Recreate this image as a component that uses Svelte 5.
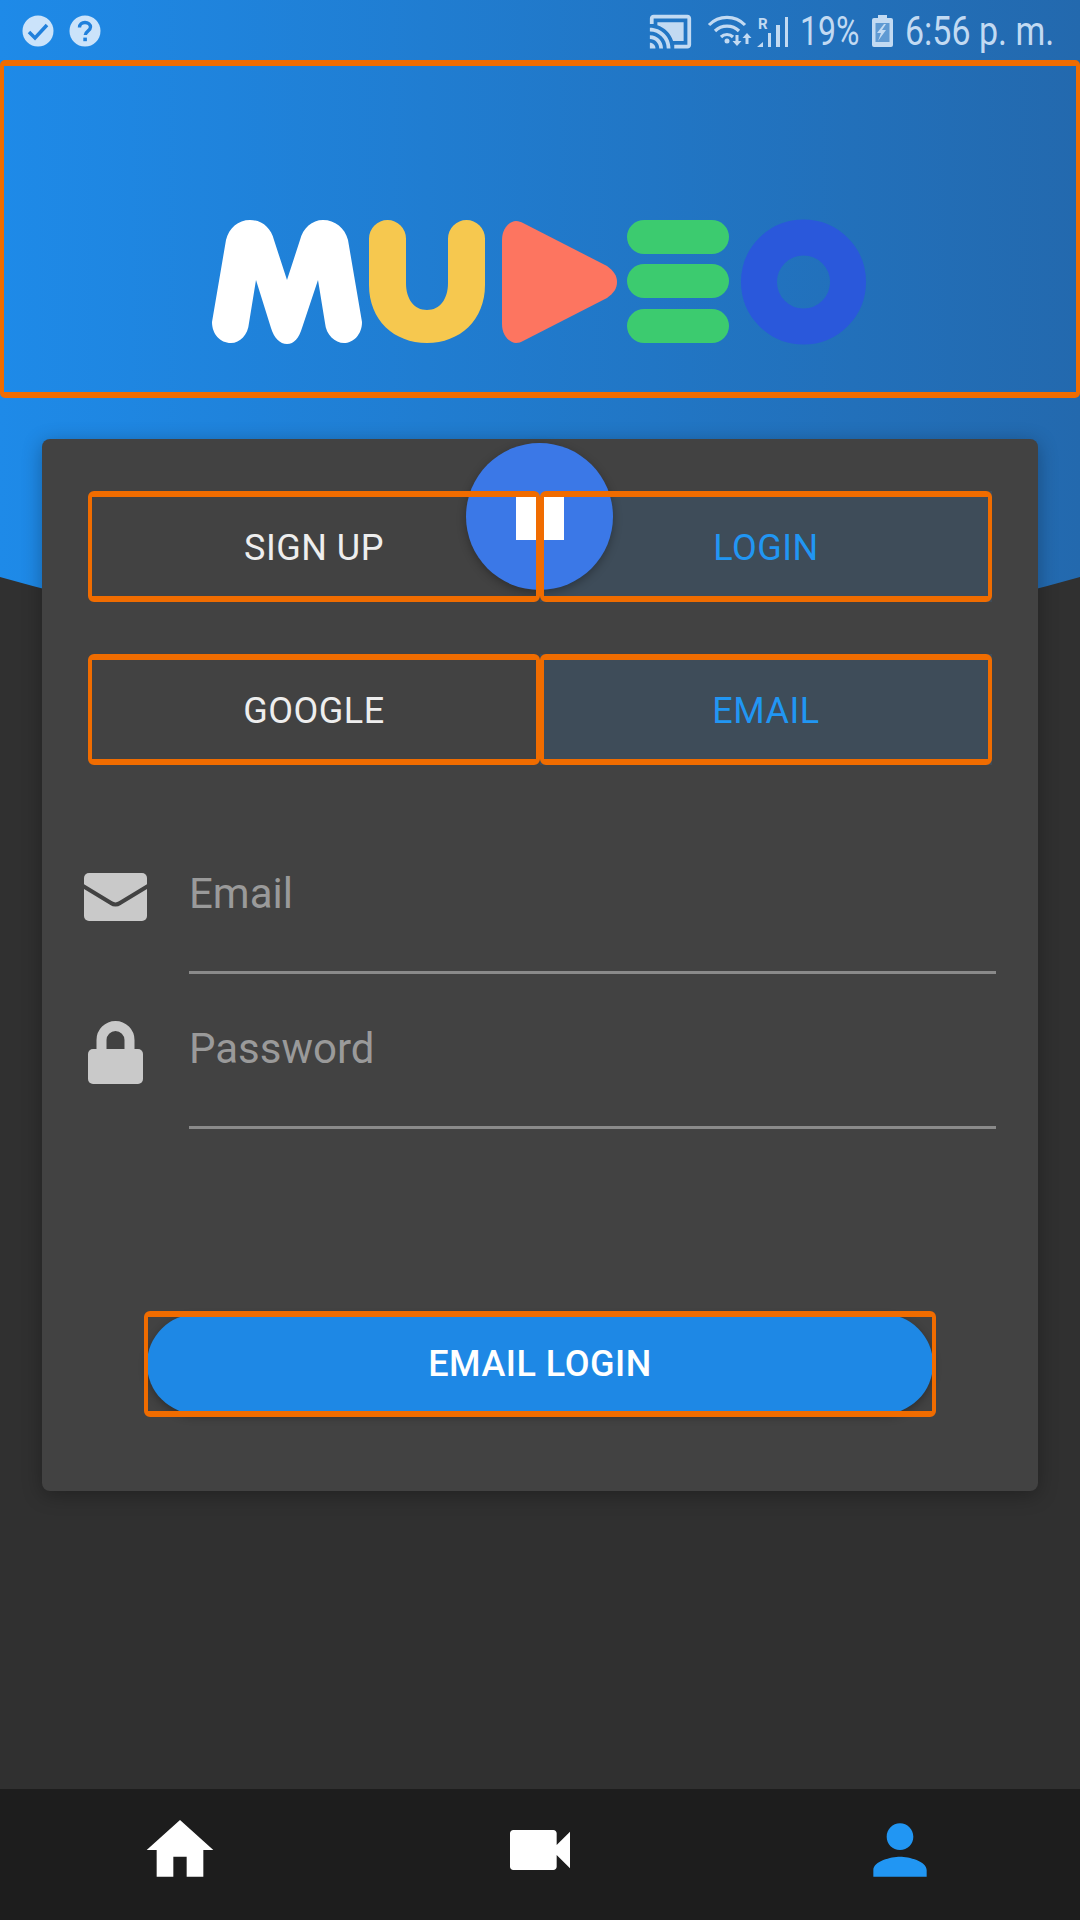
<script>
  const navItems = [
    { name: "home", active: false, d: "M10 20v-6h4v6h5v-8h3L12 3 2 12h3v8z" },
    { name: "video", active: false, d: "M17 10.5V7c0-.55-.45-1-1-1H4c-.55 0-1 .45-1 1v10c0 .55.45 1 1 1h12c.55 0 1-.45 1-1v-3.5l4 4v-11l-4 4z" },
    { name: "account", active: true, d: "M12 12c2.21 0 4-1.79 4-4s-1.79-4-4-4-4 1.79-4 4 1.79 4 4 4zm0 2c-2.67 0-8 1.34-8 4v2h16v-2c0-2.66-5.33-4-8-4z" }
  ];
</script>

<div class="page">
  <div class="backdrop"></div>

  <div class="status">
    <div class="status-left">
      <svg width="32" height="32" viewBox="0 0 32 32">
        <circle cx="16" cy="16" r="15.5" fill="#cbe3fa" />
        <path d="M7 17l6 6L25 10" fill="none" stroke="#2080dc" stroke-width="3.5" />
      </svg>
      <svg width="32" height="32" viewBox="0 0 32 32">
        <circle cx="16" cy="16" r="15.5" fill="#cbe3fa" />
        <path d="M10.5 12.5c0-3.2 2.4-5 5.5-5s5.5 1.8 5.5 4.6c0 4-5.2 4-5.2 8" fill="none" stroke="#2080dc" stroke-width="3.4" />
        <rect x="14.3" y="22.6" width="3.6" height="3.6" fill="#2080dc" />
      </svg>
    </div>
    <div class="status-right">
      <svg class="cast" width="45" height="45" viewBox="0 0 24 24">
        <path d="M1 18v3h3c0-1.66-1.34-3-3-3zm0-4v2c2.76 0 5 2.24 5 5h2c0-3.87-3.13-7-7-7zm18-7H5v1.63c3.96 1.28 7.09 4.41 8.37 8.37H19V7zM1 10v2c4.97 0 9 4.03 9 9h2c0-6.08-4.93-11-11-11zm20-7H3c-1.1 0-2 .9-2 2v3h2V5h18v14h-7v2h7c1.1 0 2-.9 2-2V5c0-1.1-.9-2-2-2z" />
      </svg>
      <div class="network">
        <svg width="85" height="40" viewBox="0 0 85 40">
          <g fill="none" stroke-width="3.2">
            <path d="M2 14a25 25 0 0 1 36 0" />
            <path d="M8 20a17 17 0 0 1 24 0" />
            <path d="M14 26a8.500 8.500 0 0 1 12 0" />
          </g>
          <circle cx="20" cy="30" r="2.500" />
          <path d="M28.500 24h3v6h3l-4.500 5-4.500-5h3zM40 22l4.500 5h-3v6h-3v-6h-3z" />
          <path d="M50 36l6-5v5zM61 22h3v14h-3zM69 14h4v22h-4zM78 6h3v30h-3z" />
        </svg>
        <span class="roaming">R</span>
      </div>
      <span class="percent"><span>19%</span></span>
      <svg class="battery" width="21" height="32" viewBox="0 0 21 32">
        <path d="M6 0h9v3h4q2 0 2 2v25q0 2-2 2H2q-2 0-2-2V5q0-2 2-2h4z" />
        <path class="battery-window" d="M3.500 8h14v19h-14z" />
        <path d="M12 9l-7 9h4l-3 8 8-11h-4l4-6z" />
      </svg>
      <span class="clock"><span>6:56 p. m.</span></span>
    </div>
  </div>

  <div class="logo-box">
    <svg width="656" height="126" viewBox="212 219 656 126">
      <path fill="#fff" d="M212 322L226 240C229 228 238 220 250 220C262 220 271 228 274 240L287 280L300 240C303 228 312 220 323 220C335 220 345 228 348 240L362 322C362 335 353 343 344 343C335 343 326 335 325 323L318 280L302 328C299 338 294 344 287 344C280 344 274 338 271 328L256 280L249 323C248 335 240 343 231 343C220 343 212 334 212 322Z" />
      <path fill="#f6c84f" d="M369 238.500a18.500 18.500 0 0 1 37 0V283C406 299 414 310 427 310C440 310 448 299 448 283V238.500a18.500 18.500 0 0 1 37 0V285C485 320 460 343 427 343C394 343 369 320 369 285Z" />
      <path fill="#fd7560" d="M502 240C502 228 510 221 516 221C519 221 521 222 523 223L607 266C614 271 617 276 617 282C617 288 614 293 607 298L523 341C521 342 519 343 516 343C510 343 502 336 502 324Z" />
      <rect x="627" y="220" width="102" height="34" rx="17" fill="#3ccb6f" />
      <rect x="627" y="264" width="102" height="34" rx="17" fill="#3ccb6f" />
      <rect x="627" y="309" width="102" height="34" rx="17" fill="#3ccb6f" />
      <circle cx="803.500" cy="282" r="44.500" fill="none" stroke="#2a58db" stroke-width="36" />
    </svg>
  </div>

  <div class="card">
    <div class="fab">
      <svg width="48" height="46" viewBox="0 0 48 46">
        <rect x="0" y="0" width="20" height="46" fill="#fff" />
        <rect x="28" y="0" width="20" height="46" fill="#fff" />
      </svg>
    </div>

    <div class="tabs">
      <div class="tab">SIGN UP</div>
      <div class="tab selected">LOGIN</div>
    </div>
    <div class="tabs">
      <div class="tab">GOOGLE</div>
      <div class="tab selected">EMAIL</div>
    </div>

    <div class="field">
      <div class="field-icon">
        <svg width="63" height="48" viewBox="0 0 63 48">
          <rect width="63" height="48" rx="5" fill="#c9c9c9" />
          <path d="M-1 13L27 30Q31.500 33 36 30L64 13" fill="none" stroke="#424242" stroke-width="4" />
        </svg>
      </div>
      <div class="field-line">Email</div>
    </div>
    <div class="field">
      <div class="field-icon lock">
        <svg width="55" height="63" viewBox="0 0 55 63">
          <path d="M13.500 30V19a14 14 0 0 1 28 0V30" fill="none" stroke="#c9c9c9" stroke-width="10" />
          <rect y="28" width="55" height="35" rx="5" fill="#c9c9c9" />
        </svg>
      </div>
      <div class="field-line">Password</div>
    </div>

    <div class="submit">EMAIL LOGIN</div>
  </div>

  <div class="nav">
    {#each navItems as item}
      <div class="nav-item" class:active={item.active}>
        <svg width="80" height="80" viewBox="0 0 24 24" aria-label={item.name}><path d={item.d} /></svg>
      </div>
    {/each}
  </div>
</div>

<style>
  :global(body) {
    margin: 0;
    background: #303030;
  }

  .page {
    position: relative;
    display: flex;
    flex-direction: column;
    width: 1080px;
    height: 1920px;
    overflow: hidden;
    background: #303030;
    font-family: Roboto, "Liberation Sans", sans-serif;
  }

  .backdrop {
    position: absolute;
    top: 0;
    left: 0;
    width: 1080px;
    height: 700px;
    background: linear-gradient(to right, #1e8ae8, #2369ae);
    clip-path: path("M0 0H1080V577Q540 730 0 577Z");
  }

  .status {
    position: relative;
    display: flex;
    justify-content: space-between;
    align-items: center;
    height: 60px;
    padding: 2px 20px 0 22px;
    box-sizing: border-box;
    color: #c2daf2;
  }

  .status-left {
    display: flex;
    gap: 15px;
  }

  .status-right {
    display: flex;
    align-items: center;
    font-size: 40px;
  }

  .status-right svg {
    display: block;
    fill: #c2daf2;
    stroke: #c2daf2;
    stroke-width: 0;
  }

  .status-right svg g {
    stroke-width: 3.2;
  }

  .status-right svg .battery-window {
    fill: #5f9ad3;
  }

  .cast {
    margin-right: 14px;
  }

  .network {
    position: relative;
    margin-right: 8px;
  }

  .roaming {
    position: absolute;
    top: 4px;
    left: 51px;
    font-size: 15px;
    font-weight: 700;
  }

  .percent {
    width: 60px;
    margin-right: 12px;
  }

  .clock {
    width: 155px;
    margin-left: 12px;
  }

  .percent span,
  .clock span {
    display: inline-block;
    white-space: nowrap;
    transform-origin: left center;
  }

  .percent span {
    transform: scaleX(0.8);
  }

  .clock span {
    transform: scaleX(0.85);
  }

  .logo-box {
    position: relative;
    display: flex;
    justify-content: center;
    align-items: flex-start;
    height: 338px;
    box-sizing: border-box;
    padding-top: 153px;
    border-style: solid;
    border-width: 6px 4px;
    border-color: #f06c00;
    border-radius: 5px;
  }

  .logo-box svg {
    display: block;
  }

  .card {
    position: relative;
    height: 1052px;
    margin: 41px 42px 0;
    padding: 52px 42px 0;
    box-sizing: border-box;
    background: #424242;
    border-radius: 8px;
    box-shadow: 0 4px 20px rgba(0, 0, 0, 0.3);
  }

  .fab {
    position: absolute;
    top: 4px;
    left: 424px;
    display: flex;
    justify-content: center;
    padding-top: 51px;
    width: 147px;
    height: 147px;
    box-sizing: border-box;
    border-radius: 50%;
    background: #3b78e7;
    box-shadow: 0 3px 10px rgba(0, 0, 0, 0.3);
    z-index: 1;
  }

  .fab svg {
    display: block;
  }

  .tabs {
    display: grid;
    grid-template-columns: 1fr 1fr;
    height: 111px;
    margin: 0 4px 52px;
  }

  .tab {
    position: relative;
    display: flex;
    justify-content: center;
    align-items: center;
    padding-top: 2px;
    font-size: 36px;
    letter-spacing: 0.5px;
    color: #eeeeee;
  }

  .tab.selected {
    background: #3e4c59;
    color: #2196f3;
  }

  .tab::after {
    content: "";
    position: absolute;
    inset: 0;
    border-style: solid;
    border-width: 6px 4px;
    border-color: #f06c00;
    border-radius: 6px;
    z-index: 2;
  }

  .field {
    display: flex;
    gap: 42px;
    height: 108px;
    margin-top: 47px;
  }

  .tabs + .field {
    margin-top: 101px;
  }

  .field-icon {
    display: flex;
    justify-content: center;
    width: 63px;
    padding-top: 7px;
  }

  .field-icon.lock {
    padding-top: 0;
  }

  .field-icon svg {
    display: block;
  }

  .field-line {
    flex: 1;
    height: 108px;
    box-sizing: border-box;
    border-bottom: 3px solid #8a8a8a;
    font-size: 42px;
    line-height: 56px;
    color: #9a9a9a;
  }

  .submit {
    position: relative;
    display: flex;
    justify-content: center;
    align-items: center;
    width: 786px;
    height: 100px;
    margin: 185px auto 0;
    border-radius: 50px;
    background: #1e88e5;
    box-shadow: 0 3px 8px rgba(0, 0, 0, 0.3);
    font-size: 36px;
    font-weight: 500;
    letter-spacing: 0.5px;
    color: #fff;
  }

  .submit::after {
    content: "";
    position: absolute;
    inset: -3px;
    border-style: solid;
    border-width: 6px 4px;
    border-color: #f06c00;
    border-radius: 6px;
  }

  .nav {
    display: grid;
    grid-template-columns: repeat(3, 1fr);
    justify-items: center;
    height: 131px;
    margin-top: auto;
    padding-top: 21px;
    box-sizing: border-box;
    background: #1d1d1d;
  }

  .nav-item svg {
    display: block;
    fill: #fff;
  }

  .nav-item.active svg {
    fill: #2196f3;
  }
</style>
